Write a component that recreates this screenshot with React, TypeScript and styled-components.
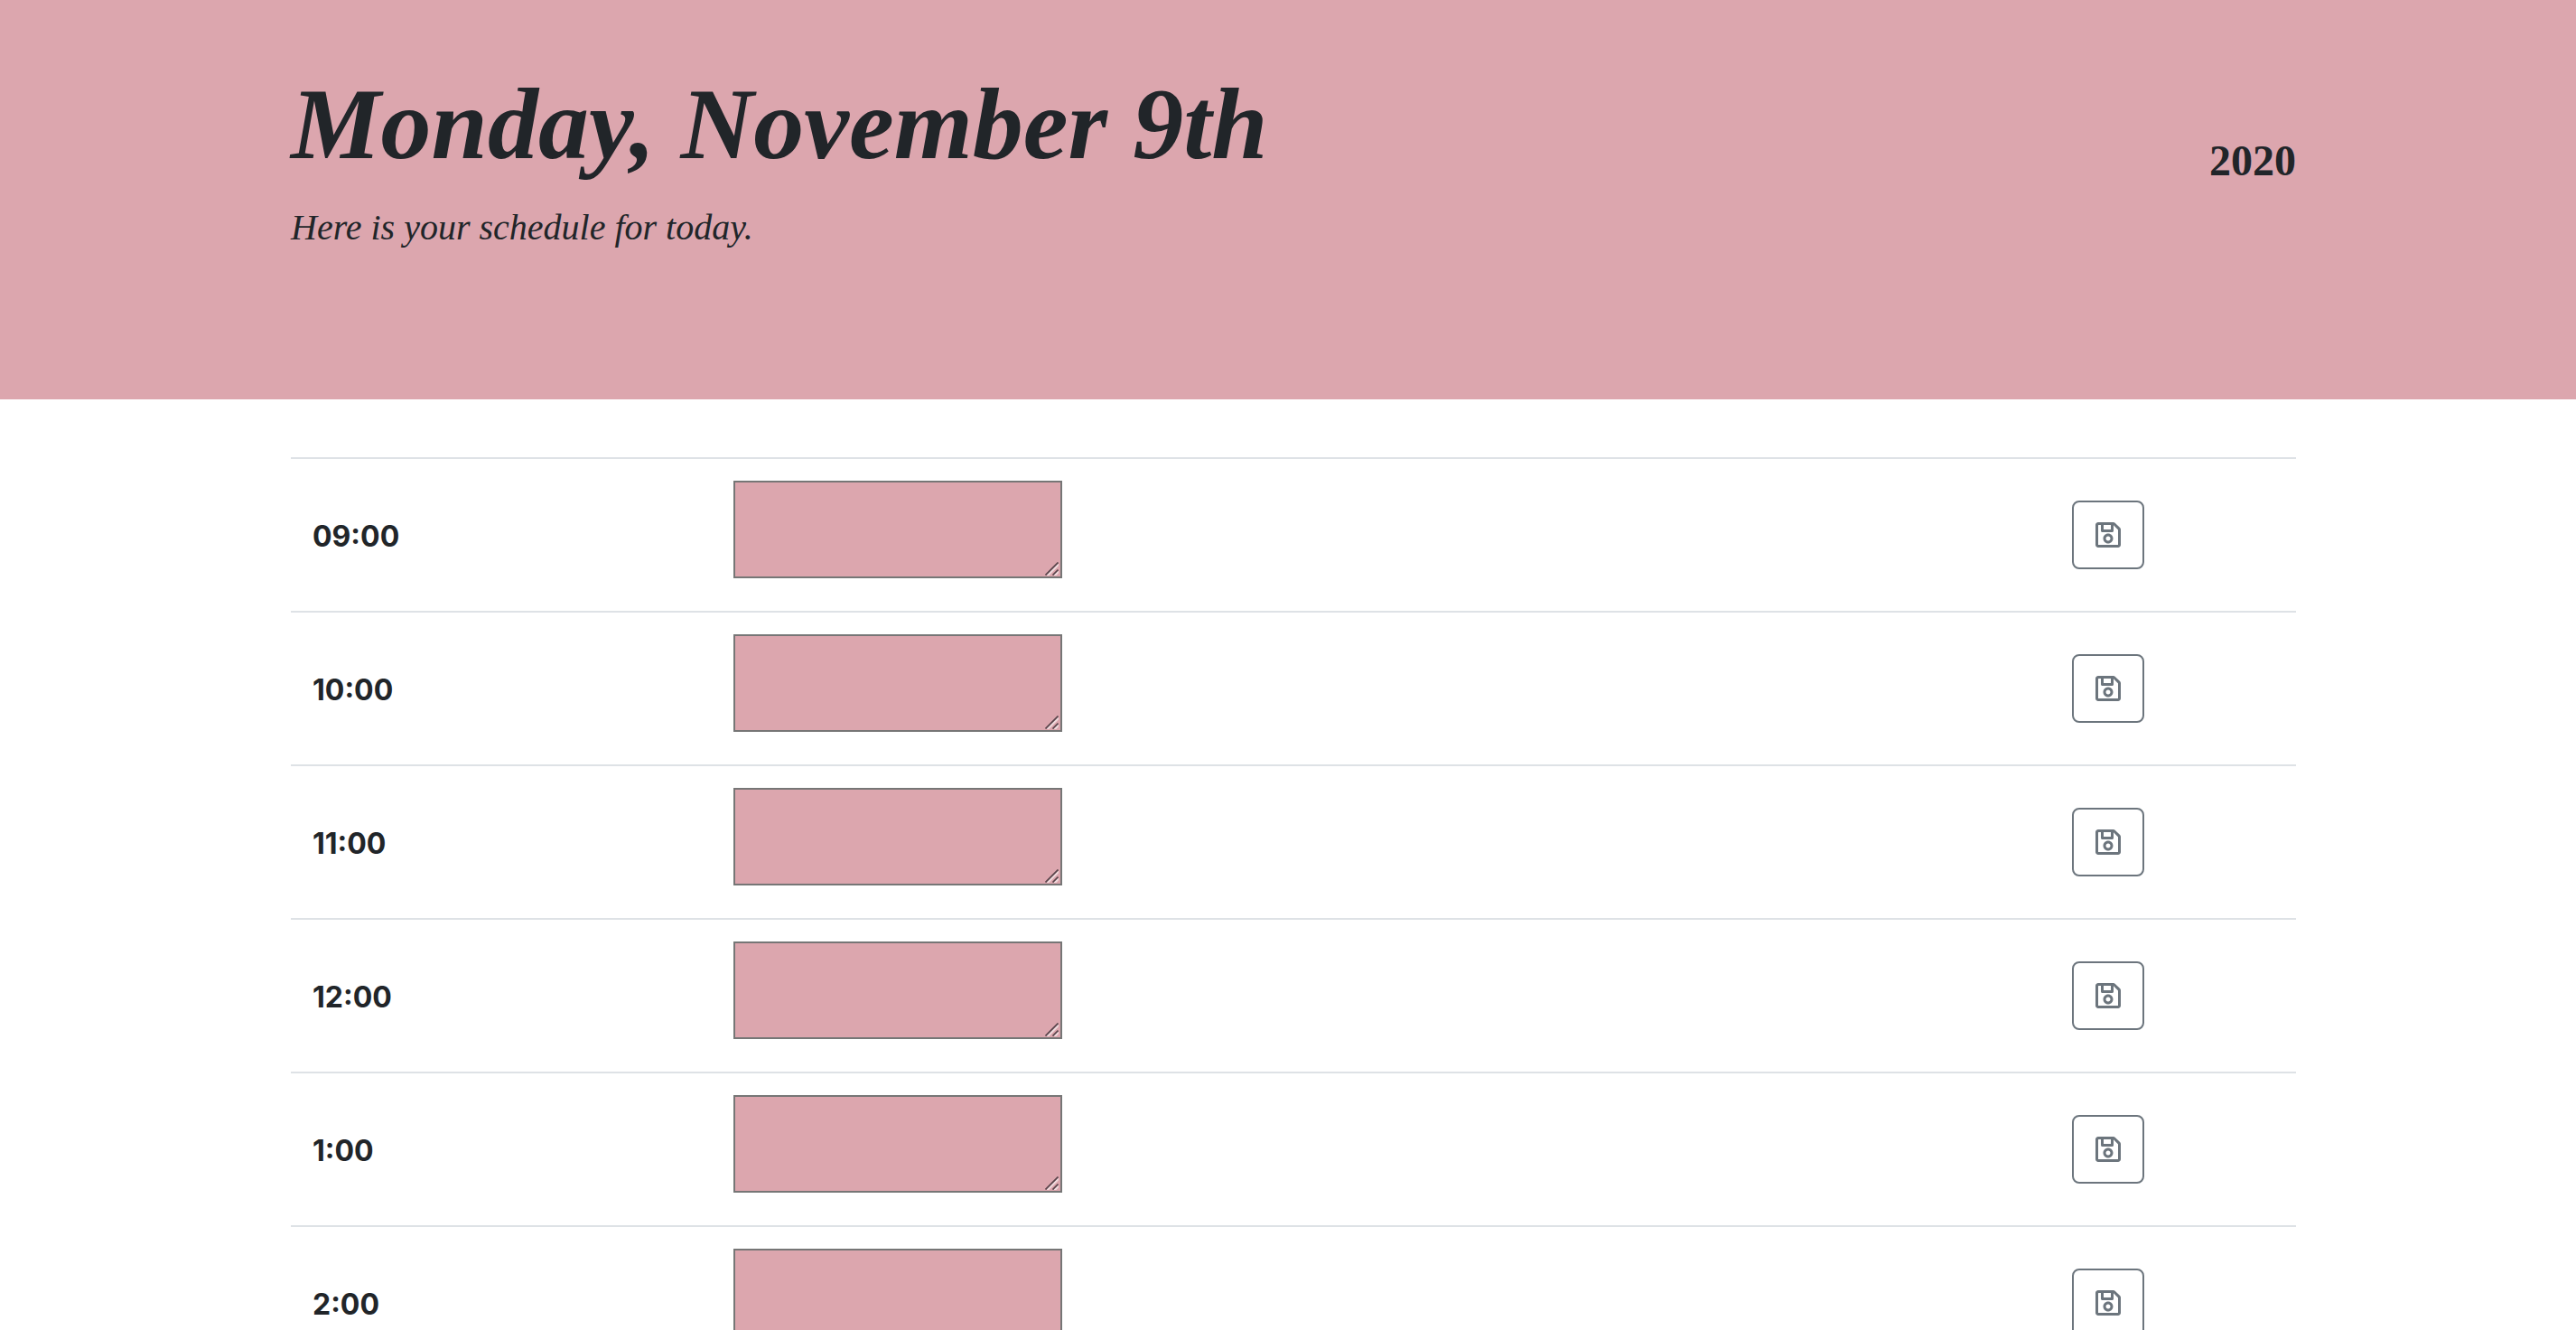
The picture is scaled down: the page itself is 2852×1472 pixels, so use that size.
import React from "react";
import styled, { createGlobalStyle } from "styled-components";
import { FaRegSave } from "react-icons/fa";

const ink = "#212529";
const rose = "#dca6ae";
const line = "#dee2e6";
const slate = "#6c757d";

const GlobalStyle = createGlobalStyle`
  *, *::before, *::after { box-sizing: border-box; }
  body {
    margin: 0;
    background: #fff;
    color: ${ink};
    font-family: Inter, "Liberation Sans", sans-serif;
    font-size: 32px;
    line-height: 48px;
  }
`;

const Page = styled.div`
  min-height: 100vh;
`;

const Container = styled.div`
  width: 80%;
  max-width: 2220px;
  margin: 0 auto;
`;

const Band = styled.header`
  padding: 70px 0 160px 12px;
  background: ${rose};
  font-family: "Liberation Serif", "Times New Roman", serif;
`;

const BandRow = styled(Container)`
  display: flex;
  justify-content: space-between;
  align-items: flex-start;
`;

const Title = styled.h1`
  margin: 0 0 18px;
  font-size: 112px;
  line-height: 134px;
  font-weight: 700;
  font-style: italic;
`;

const Lead = styled.p`
  margin: 0;
  font-size: 40px;
  line-height: 60px;
  font-style: italic;
`;

const Year = styled.h2`
  margin: 0;
  padding-top: 80px;
  font-size: 48px;
  line-height: 56px;
  font-weight: 700;
`;

const Main = styled.main`
  padding: 64px 0 0 12px;
`;

const Schedule = styled.table`
  width: 100%;
  border-collapse: separate;
  border-spacing: 0;
  table-layout: fixed;
`;

const TimeCol = styled.col`
  width: 21%;
`;

const SaveCol = styled.col`
  width: 272px;
`;

const Hour = styled.th`
  padding: 28px 24px 24px;
  border-top: 2px solid ${line};
  text-align: left;
  font-weight: 700;
  vertical-align: middle;
`;

const Cell = styled.td`
  height: 170px;
  padding: 24px;
  border-top: 2px solid ${line};
  vertical-align: middle;
`;

const NoteCell = styled(Cell)`
  vertical-align: top;
`;

const NoteBox = styled.div`
  position: relative;
  width: 364px;
  height: 108px;
`;

const Note = styled.textarea`
  display: block;
  width: 100%;
  height: 100%;
  padding: 4px;
  border: 2px solid #767676;
  border-radius: 0;
  background: ${rose};
  color: ${ink};
  font: inherit;
  resize: none;
`;

const Grip = styled.svg`
  position: absolute;
  right: 4px;
  bottom: 3px;
  width: 15px;
  height: 15px;
  pointer-events: none;
`;

const SaveButton = styled.button`
  display: flex;
  align-items: center;
  justify-content: center;
  width: 80px;
  height: 76px;
  padding: 0;
  border: 2px solid ${slate};
  border-radius: 8px;
  background: transparent;
  color: ${slate};
  font-size: 32px;
  cursor: pointer;
`;

const hours = ["09:00", "10:00", "11:00", "12:00", "1:00", "2:00"];

function HourRow({ hour }: { hour: string }) {
  const id = "hour-" + hour.replace(":", "");
  return (
    <tr>
      <Hour scope="row">
        <label htmlFor={id}>{hour}</label>
      </Hour>
      <NoteCell>
        <NoteBox>
          <Note id={id} />
          <Grip viewBox="0 0 15 15" aria-hidden="true">
            <path d="M2.5 15 15 2.5M10.5 15 15 10.5" stroke="#efd9dc" strokeWidth="2.5" />
            <path d="M0.5 14.5 14.5 0.5M8.5 14.5 14.5 8.5" stroke="#58434a" strokeWidth="1.7" />
          </Grip>
        </NoteBox>
      </NoteCell>
      <Cell>
        <SaveButton type="button" aria-label={"Save " + hour}>
          <FaRegSave aria-hidden="true" />
        </SaveButton>
      </Cell>
    </tr>
  );
}

export default function App() {
  return (
    <Page>
      <GlobalStyle />
      <Band>
        <BandRow>
          <div>
            <Title>Monday, November 9th</Title>
            <Lead>Here is your schedule for today.</Lead>
          </div>
          <Year>2020</Year>
        </BandRow>
      </Band>
      <Main>
        <Container>
          <Schedule>
            <colgroup>
              <TimeCol />
              <col />
              <SaveCol />
            </colgroup>
            <tbody>
              {hours.map((hour) => (
                <HourRow key={hour} hour={hour} />
              ))}
            </tbody>
          </Schedule>
        </Container>
      </Main>
    </Page>
  );
}
